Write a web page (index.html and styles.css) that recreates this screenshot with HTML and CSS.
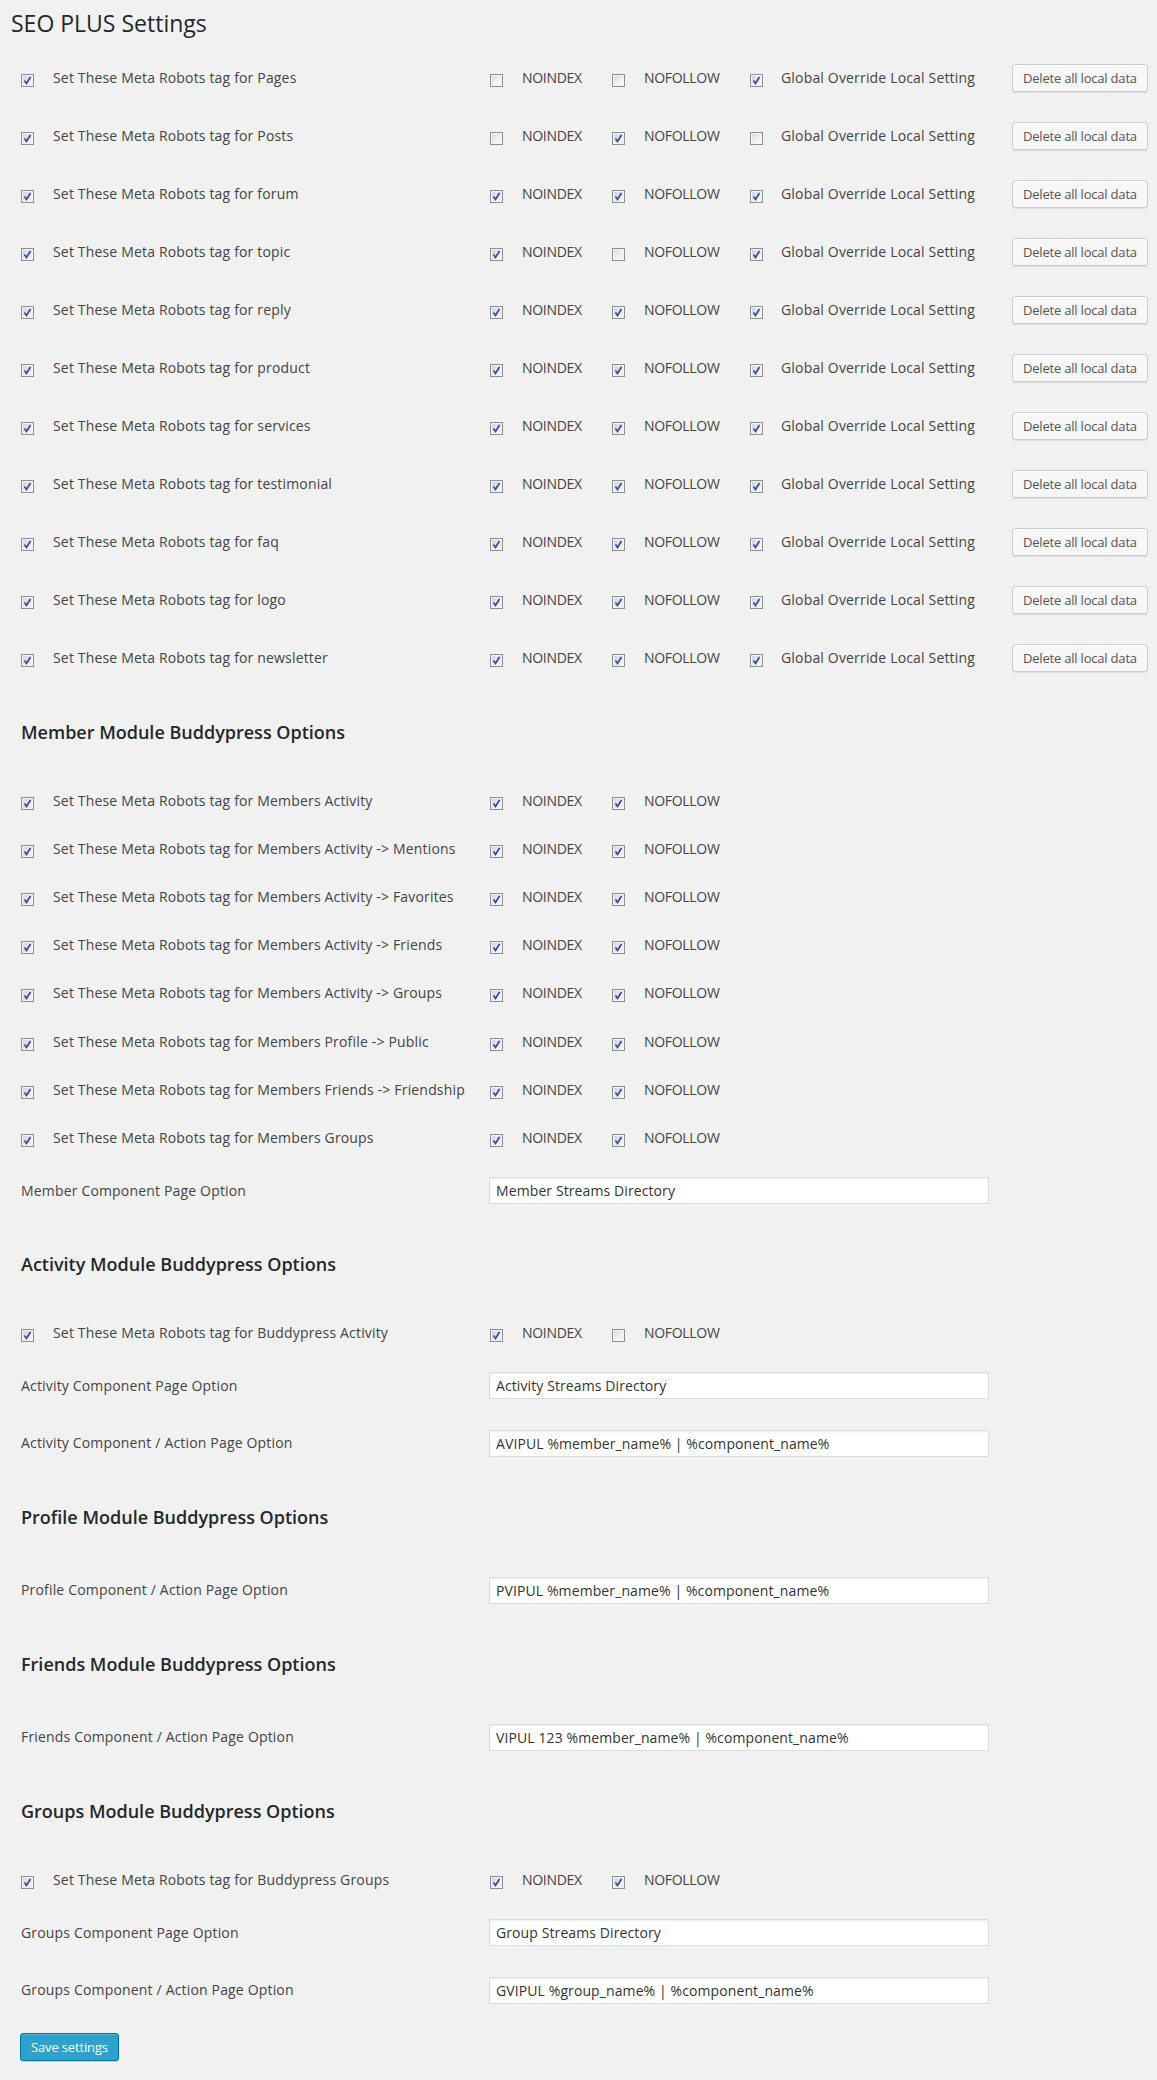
FILE: index.html
```html
<!DOCTYPE html>
<html lang="en">
<head>
<meta charset="utf-8">
<title>SEO PLUS Settings</title>
<link rel="stylesheet" href="styles.css">
</head>
<body>
<div class="wrap">
  <h2 class="title">SEO PLUS Settings</h2>

  <div class="table first">
    <div class="row row-lg">
      <span class="cb on"><svg viewBox="0 0 13 13"><path d="M3.5 6.5 L5.5 9.5 L9.5 3"/></svg></span>
      <span class="txt">Set These Meta Robots tag for Pages</span>
      <span class="cb"></span><span class="txt caps">NOINDEX</span>
      <span class="cb"></span><span class="txt caps">NOFOLLOW</span>
      <span class="cb on"><svg viewBox="0 0 13 13"><path d="M3.5 6.5 L5.5 9.5 L9.5 3"/></svg></span><span class="txt">Global Override Local Setting</span>
      <button class="btn" type="button">Delete all local data</button>
    </div>
    <div class="row row-lg">
      <span class="cb on"><svg viewBox="0 0 13 13"><path d="M3.5 6.5 L5.5 9.5 L9.5 3"/></svg></span>
      <span class="txt">Set These Meta Robots tag for Posts</span>
      <span class="cb"></span><span class="txt caps">NOINDEX</span>
      <span class="cb on"><svg viewBox="0 0 13 13"><path d="M3.5 6.5 L5.5 9.5 L9.5 3"/></svg></span><span class="txt caps">NOFOLLOW</span>
      <span class="cb"></span><span class="txt">Global Override Local Setting</span>
      <button class="btn" type="button">Delete all local data</button>
    </div>
    <div class="row row-lg">
      <span class="cb on"><svg viewBox="0 0 13 13"><path d="M3.5 6.5 L5.5 9.5 L9.5 3"/></svg></span>
      <span class="txt">Set These Meta Robots tag for forum</span>
      <span class="cb on"><svg viewBox="0 0 13 13"><path d="M3.5 6.5 L5.5 9.5 L9.5 3"/></svg></span><span class="txt caps">NOINDEX</span>
      <span class="cb on"><svg viewBox="0 0 13 13"><path d="M3.5 6.5 L5.5 9.5 L9.5 3"/></svg></span><span class="txt caps">NOFOLLOW</span>
      <span class="cb on"><svg viewBox="0 0 13 13"><path d="M3.5 6.5 L5.5 9.5 L9.5 3"/></svg></span><span class="txt">Global Override Local Setting</span>
      <button class="btn" type="button">Delete all local data</button>
    </div>
    <div class="row row-lg">
      <span class="cb on"><svg viewBox="0 0 13 13"><path d="M3.5 6.5 L5.5 9.5 L9.5 3"/></svg></span>
      <span class="txt">Set These Meta Robots tag for topic</span>
      <span class="cb on"><svg viewBox="0 0 13 13"><path d="M3.5 6.5 L5.5 9.5 L9.5 3"/></svg></span><span class="txt caps">NOINDEX</span>
      <span class="cb"></span><span class="txt caps">NOFOLLOW</span>
      <span class="cb on"><svg viewBox="0 0 13 13"><path d="M3.5 6.5 L5.5 9.5 L9.5 3"/></svg></span><span class="txt">Global Override Local Setting</span>
      <button class="btn" type="button">Delete all local data</button>
    </div>
    <div class="row row-lg">
      <span class="cb on"><svg viewBox="0 0 13 13"><path d="M3.5 6.5 L5.5 9.5 L9.5 3"/></svg></span>
      <span class="txt">Set These Meta Robots tag for reply</span>
      <span class="cb on"><svg viewBox="0 0 13 13"><path d="M3.5 6.5 L5.5 9.5 L9.5 3"/></svg></span><span class="txt caps">NOINDEX</span>
      <span class="cb on"><svg viewBox="0 0 13 13"><path d="M3.5 6.5 L5.5 9.5 L9.5 3"/></svg></span><span class="txt caps">NOFOLLOW</span>
      <span class="cb on"><svg viewBox="0 0 13 13"><path d="M3.5 6.5 L5.5 9.5 L9.5 3"/></svg></span><span class="txt">Global Override Local Setting</span>
      <button class="btn" type="button">Delete all local data</button>
    </div>
    <div class="row row-lg">
      <span class="cb on"><svg viewBox="0 0 13 13"><path d="M3.5 6.5 L5.5 9.5 L9.5 3"/></svg></span>
      <span class="txt">Set These Meta Robots tag for product</span>
      <span class="cb on"><svg viewBox="0 0 13 13"><path d="M3.5 6.5 L5.5 9.5 L9.5 3"/></svg></span><span class="txt caps">NOINDEX</span>
      <span class="cb on"><svg viewBox="0 0 13 13"><path d="M3.5 6.5 L5.5 9.5 L9.5 3"/></svg></span><span class="txt caps">NOFOLLOW</span>
      <span class="cb on"><svg viewBox="0 0 13 13"><path d="M3.5 6.5 L5.5 9.5 L9.5 3"/></svg></span><span class="txt">Global Override Local Setting</span>
      <button class="btn" type="button">Delete all local data</button>
    </div>
    <div class="row row-lg">
      <span class="cb on"><svg viewBox="0 0 13 13"><path d="M3.5 6.5 L5.5 9.5 L9.5 3"/></svg></span>
      <span class="txt">Set These Meta Robots tag for services</span>
      <span class="cb on"><svg viewBox="0 0 13 13"><path d="M3.5 6.5 L5.5 9.5 L9.5 3"/></svg></span><span class="txt caps">NOINDEX</span>
      <span class="cb on"><svg viewBox="0 0 13 13"><path d="M3.5 6.5 L5.5 9.5 L9.5 3"/></svg></span><span class="txt caps">NOFOLLOW</span>
      <span class="cb on"><svg viewBox="0 0 13 13"><path d="M3.5 6.5 L5.5 9.5 L9.5 3"/></svg></span><span class="txt">Global Override Local Setting</span>
      <button class="btn" type="button">Delete all local data</button>
    </div>
    <div class="row row-lg">
      <span class="cb on"><svg viewBox="0 0 13 13"><path d="M3.5 6.5 L5.5 9.5 L9.5 3"/></svg></span>
      <span class="txt">Set These Meta Robots tag for testimonial</span>
      <span class="cb on"><svg viewBox="0 0 13 13"><path d="M3.5 6.5 L5.5 9.5 L9.5 3"/></svg></span><span class="txt caps">NOINDEX</span>
      <span class="cb on"><svg viewBox="0 0 13 13"><path d="M3.5 6.5 L5.5 9.5 L9.5 3"/></svg></span><span class="txt caps">NOFOLLOW</span>
      <span class="cb on"><svg viewBox="0 0 13 13"><path d="M3.5 6.5 L5.5 9.5 L9.5 3"/></svg></span><span class="txt">Global Override Local Setting</span>
      <button class="btn" type="button">Delete all local data</button>
    </div>
    <div class="row row-lg">
      <span class="cb on"><svg viewBox="0 0 13 13"><path d="M3.5 6.5 L5.5 9.5 L9.5 3"/></svg></span>
      <span class="txt">Set These Meta Robots tag for faq</span>
      <span class="cb on"><svg viewBox="0 0 13 13"><path d="M3.5 6.5 L5.5 9.5 L9.5 3"/></svg></span><span class="txt caps">NOINDEX</span>
      <span class="cb on"><svg viewBox="0 0 13 13"><path d="M3.5 6.5 L5.5 9.5 L9.5 3"/></svg></span><span class="txt caps">NOFOLLOW</span>
      <span class="cb on"><svg viewBox="0 0 13 13"><path d="M3.5 6.5 L5.5 9.5 L9.5 3"/></svg></span><span class="txt">Global Override Local Setting</span>
      <button class="btn" type="button">Delete all local data</button>
    </div>
    <div class="row row-lg">
      <span class="cb on"><svg viewBox="0 0 13 13"><path d="M3.5 6.5 L5.5 9.5 L9.5 3"/></svg></span>
      <span class="txt">Set These Meta Robots tag for logo</span>
      <span class="cb on"><svg viewBox="0 0 13 13"><path d="M3.5 6.5 L5.5 9.5 L9.5 3"/></svg></span><span class="txt caps">NOINDEX</span>
      <span class="cb on"><svg viewBox="0 0 13 13"><path d="M3.5 6.5 L5.5 9.5 L9.5 3"/></svg></span><span class="txt caps">NOFOLLOW</span>
      <span class="cb on"><svg viewBox="0 0 13 13"><path d="M3.5 6.5 L5.5 9.5 L9.5 3"/></svg></span><span class="txt">Global Override Local Setting</span>
      <button class="btn" type="button">Delete all local data</button>
    </div>
    <div class="row row-lg">
      <span class="cb on"><svg viewBox="0 0 13 13"><path d="M3.5 6.5 L5.5 9.5 L9.5 3"/></svg></span>
      <span class="txt">Set These Meta Robots tag for newsletter</span>
      <span class="cb on"><svg viewBox="0 0 13 13"><path d="M3.5 6.5 L5.5 9.5 L9.5 3"/></svg></span><span class="txt caps">NOINDEX</span>
      <span class="cb on"><svg viewBox="0 0 13 13"><path d="M3.5 6.5 L5.5 9.5 L9.5 3"/></svg></span><span class="txt caps">NOFOLLOW</span>
      <span class="cb on"><svg viewBox="0 0 13 13"><path d="M3.5 6.5 L5.5 9.5 L9.5 3"/></svg></span><span class="txt">Global Override Local Setting</span>
      <button class="btn" type="button">Delete all local data</button>
    </div>
  </div>

  <h3 class="sec">Member Module Buddypress Options</h3>
  <div class="table">
    <div class="row row-sm">
      <span class="cb on"><svg viewBox="0 0 13 13"><path d="M3.5 6.5 L5.5 9.5 L9.5 3"/></svg></span>
      <span class="txt">Set These Meta Robots tag for Members Activity</span>
      <span class="cb on"><svg viewBox="0 0 13 13"><path d="M3.5 6.5 L5.5 9.5 L9.5 3"/></svg></span><span class="txt caps">NOINDEX</span>
      <span class="cb on"><svg viewBox="0 0 13 13"><path d="M3.5 6.5 L5.5 9.5 L9.5 3"/></svg></span><span class="txt caps">NOFOLLOW</span>
    </div>
    <div class="row row-sm">
      <span class="cb on"><svg viewBox="0 0 13 13"><path d="M3.5 6.5 L5.5 9.5 L9.5 3"/></svg></span>
      <span class="txt">Set These Meta Robots tag for Members Activity -&gt; Mentions</span>
      <span class="cb on"><svg viewBox="0 0 13 13"><path d="M3.5 6.5 L5.5 9.5 L9.5 3"/></svg></span><span class="txt caps">NOINDEX</span>
      <span class="cb on"><svg viewBox="0 0 13 13"><path d="M3.5 6.5 L5.5 9.5 L9.5 3"/></svg></span><span class="txt caps">NOFOLLOW</span>
    </div>
    <div class="row row-sm">
      <span class="cb on"><svg viewBox="0 0 13 13"><path d="M3.5 6.5 L5.5 9.5 L9.5 3"/></svg></span>
      <span class="txt">Set These Meta Robots tag for Members Activity -&gt; Favorites</span>
      <span class="cb on"><svg viewBox="0 0 13 13"><path d="M3.5 6.5 L5.5 9.5 L9.5 3"/></svg></span><span class="txt caps">NOINDEX</span>
      <span class="cb on"><svg viewBox="0 0 13 13"><path d="M3.5 6.5 L5.5 9.5 L9.5 3"/></svg></span><span class="txt caps">NOFOLLOW</span>
    </div>
    <div class="row row-sm">
      <span class="cb on"><svg viewBox="0 0 13 13"><path d="M3.5 6.5 L5.5 9.5 L9.5 3"/></svg></span>
      <span class="txt">Set These Meta Robots tag for Members Activity -&gt; Friends</span>
      <span class="cb on"><svg viewBox="0 0 13 13"><path d="M3.5 6.5 L5.5 9.5 L9.5 3"/></svg></span><span class="txt caps">NOINDEX</span>
      <span class="cb on"><svg viewBox="0 0 13 13"><path d="M3.5 6.5 L5.5 9.5 L9.5 3"/></svg></span><span class="txt caps">NOFOLLOW</span>
    </div>
    <div class="row row-sm">
      <span class="cb on"><svg viewBox="0 0 13 13"><path d="M3.5 6.5 L5.5 9.5 L9.5 3"/></svg></span>
      <span class="txt">Set These Meta Robots tag for Members Activity -&gt; Groups</span>
      <span class="cb on"><svg viewBox="0 0 13 13"><path d="M3.5 6.5 L5.5 9.5 L9.5 3"/></svg></span><span class="txt caps">NOINDEX</span>
      <span class="cb on"><svg viewBox="0 0 13 13"><path d="M3.5 6.5 L5.5 9.5 L9.5 3"/></svg></span><span class="txt caps">NOFOLLOW</span>
    </div>
    <div class="row row-sm">
      <span class="cb on"><svg viewBox="0 0 13 13"><path d="M3.5 6.5 L5.5 9.5 L9.5 3"/></svg></span>
      <span class="txt">Set These Meta Robots tag for Members Profile -&gt; Public</span>
      <span class="cb on"><svg viewBox="0 0 13 13"><path d="M3.5 6.5 L5.5 9.5 L9.5 3"/></svg></span><span class="txt caps">NOINDEX</span>
      <span class="cb on"><svg viewBox="0 0 13 13"><path d="M3.5 6.5 L5.5 9.5 L9.5 3"/></svg></span><span class="txt caps">NOFOLLOW</span>
    </div>
    <div class="row row-sm">
      <span class="cb on"><svg viewBox="0 0 13 13"><path d="M3.5 6.5 L5.5 9.5 L9.5 3"/></svg></span>
      <span class="txt">Set These Meta Robots tag for Members Friends -&gt; Friendship</span>
      <span class="cb on"><svg viewBox="0 0 13 13"><path d="M3.5 6.5 L5.5 9.5 L9.5 3"/></svg></span><span class="txt caps">NOINDEX</span>
      <span class="cb on"><svg viewBox="0 0 13 13"><path d="M3.5 6.5 L5.5 9.5 L9.5 3"/></svg></span><span class="txt caps">NOFOLLOW</span>
    </div>
    <div class="row row-sm">
      <span class="cb on"><svg viewBox="0 0 13 13"><path d="M3.5 6.5 L5.5 9.5 L9.5 3"/></svg></span>
      <span class="txt">Set These Meta Robots tag for Members Groups</span>
      <span class="cb on"><svg viewBox="0 0 13 13"><path d="M3.5 6.5 L5.5 9.5 L9.5 3"/></svg></span><span class="txt caps">NOINDEX</span>
      <span class="cb on"><svg viewBox="0 0 13 13"><path d="M3.5 6.5 L5.5 9.5 L9.5 3"/></svg></span><span class="txt caps">NOFOLLOW</span>
    </div>
    <div class="row row-field">
      <span class="txt field-label">Member Component Page Option</span>
      <input class="field" type="text" value="Member Streams Directory">
    </div>
  </div>

  <h3 class="sec">Activity Module Buddypress Options</h3>
  <div class="table">
    <div class="row row-sm">
      <span class="cb on"><svg viewBox="0 0 13 13"><path d="M3.5 6.5 L5.5 9.5 L9.5 3"/></svg></span>
      <span class="txt">Set These Meta Robots tag for Buddypress Activity</span>
      <span class="cb on"><svg viewBox="0 0 13 13"><path d="M3.5 6.5 L5.5 9.5 L9.5 3"/></svg></span><span class="txt caps">NOINDEX</span>
      <span class="cb"></span><span class="txt caps">NOFOLLOW</span>
    </div>
    <div class="row row-field">
      <span class="txt field-label">Activity Component Page Option</span>
      <input class="field" type="text" value="Activity Streams Directory">
    </div>
    <div class="row row-field">
      <span class="txt field-label">Activity Component / Action Page Option</span>
      <input class="field" type="text" value="AVIPUL %member_name% | %component_name%">
    </div>
  </div>

  <h3 class="sec">Profile Module Buddypress Options</h3>
  <div class="table">
    <div class="row row-field">
      <span class="txt field-label">Profile Component / Action Page Option</span>
      <input class="field" type="text" value="PVIPUL %member_name% | %component_name%">
    </div>
  </div>

  <h3 class="sec">Friends Module Buddypress Options</h3>
  <div class="table">
    <div class="row row-field">
      <span class="txt field-label">Friends Component / Action Page Option</span>
      <input class="field" type="text" value="VIPUL 123 %member_name% | %component_name%">
    </div>
  </div>

  <h3 class="sec">Groups Module Buddypress Options</h3>
  <div class="table">
    <div class="row row-sm">
      <span class="cb on"><svg viewBox="0 0 13 13"><path d="M3.5 6.5 L5.5 9.5 L9.5 3"/></svg></span>
      <span class="txt">Set These Meta Robots tag for Buddypress Groups</span>
      <span class="cb on"><svg viewBox="0 0 13 13"><path d="M3.5 6.5 L5.5 9.5 L9.5 3"/></svg></span><span class="txt caps">NOINDEX</span>
      <span class="cb on"><svg viewBox="0 0 13 13"><path d="M3.5 6.5 L5.5 9.5 L9.5 3"/></svg></span><span class="txt caps">NOFOLLOW</span>
    </div>
    <div class="row row-field">
      <span class="txt field-label">Groups Component Page Option</span>
      <input class="field" type="text" value="Group Streams Directory">
    </div>
    <div class="row row-field">
      <span class="txt field-label">Groups Component / Action Page Option</span>
      <input class="field" type="text" value="GVIPUL %group_name% | %component_name%">
    </div>
  </div>

  <p class="submit"><button class="btn-primary" type="button">Save settings</button></p>
</div>
</body>
</html>
```

FILE: styles.css
```css
html, body {
  background: #f1f1f1;
}
body {
  margin: 0;
  font-family: "Open Sans", "Liberation Sans", sans-serif;
  font-size: 13px;
  color: #444;
}
.wrap {
  padding: 0 0 19px 11px;
}
.title {
  margin: 0;
  padding: 9px 0 4px;
  font-size: 23px;
  line-height: 29px;
  font-weight: 400;
  color: #23282d;
}
.table.first {
  margin-top: 7px;
}
.row {
  display: grid;
  grid-template-columns: 32px 437px 32px 90px 32px 106px 31px 231px auto;
  align-items: center;
  padding-left: 10px;
}
.row-lg { height: 58px; }
.row-sm { height: 48.2px; }
.row-field { height: 57.5px; }

.txt {
  font-size: 14px;
  line-height: 18px;
  letter-spacing: 0.17px;
  white-space: nowrap;
}
.txt.caps {
  letter-spacing: -0.3px;
}
.cb {
  display: block;
  width: 13px;
  height: 13px;
  box-sizing: border-box;
  margin-top: 5px;
  border: 1px solid #8e8f8f;
  background: linear-gradient(135deg, #d8d8d8 0%, #f2f2f2 60%, #fbfbfb 100%);
  box-shadow: inset 0 0 0 1px #f3f3f3;
}
.cb.on {
  background: linear-gradient(135deg, #c9cfe0 0%, #e9ecf4 60%, #f7f8fb 100%);
}
.cb svg {
  display: block;
  width: 13px;
  height: 13px;
  margin: -1px;
}
.cb path {
  fill: none;
  stroke: #3b4c8c;
  stroke-width: 1.7;
}
.btn {
  justify-self: start;
  height: 28px;
  margin: 0;
  padding: 0 10px 1px;
  font-family: inherit;
  font-size: 13px;
  letter-spacing: -0.2px;
  line-height: 26px;
  color: #555;
  background: #f7f7f7;
  border: 1px solid #ccc;
  border-radius: 3px;
  box-shadow: inset 0 1px 0 #fff, 0 1px 0 rgba(0, 0, 0, 0.08);
  white-space: nowrap;
}
.field-label {
  grid-column: 1 / 3;
}
.field {
  grid-column: 3 / 9;
  justify-self: start;
  width: 500px;
  height: 27px;
  margin: 0 0 0 -1px;
  box-sizing: border-box;
  padding: 0 6px;
  border: 1px solid #ddd;
  background: #fff;
  box-shadow: inset 0 1px 2px rgba(0, 0, 0, 0.07);
  font-family: inherit;
  font-size: 14px;
  letter-spacing: 0.1px;
  color: #333;
  outline: none;
}
.sec {
  margin: 32.5px 0 33px;
  padding-left: 10px;
  font-size: 18px;
  line-height: 24px;
  font-weight: 600;
  color: #23282d;
}
.submit {
  margin: 14px 0 0;
  padding-left: 9px;
}
.btn-primary {
  height: 28px;
  margin: 0;
  padding: 0 10px 1px;
  font-family: inherit;
  font-size: 13px;
  letter-spacing: -0.15px;
  line-height: 26px;
  color: #fff;
  background: #2ea2cc;
  border: 1px solid #0074a2;
  border-radius: 3px;
  box-shadow: inset 0 1px 0 rgba(120, 200, 230, 0.5), 0 1px 0 rgba(0, 0, 0, 0.15);
  white-space: nowrap;
}
```
